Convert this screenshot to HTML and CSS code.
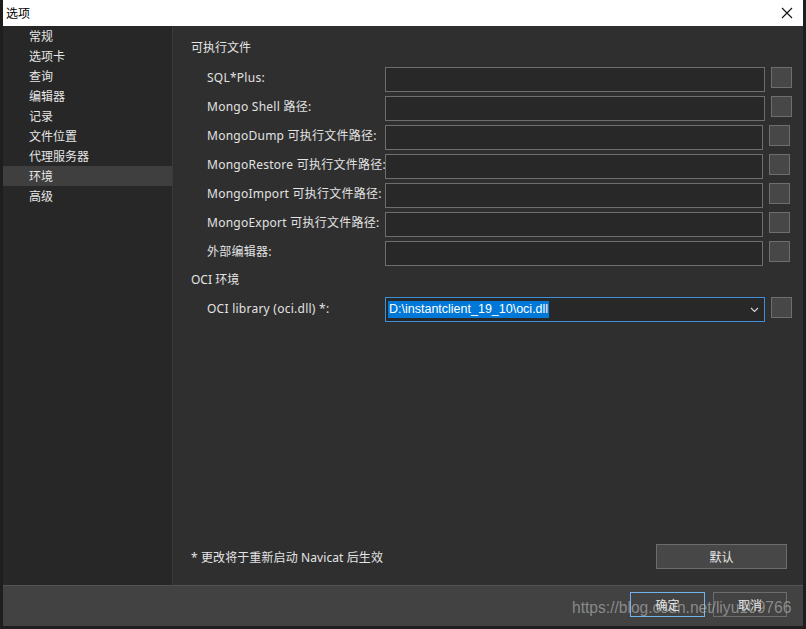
FILE: index.html
```html
<!DOCTYPE html>
<html lang="zh">
<head>
<meta charset="utf-8">
<title>选项</title>
<link rel="stylesheet" href="styles.css">
</head>
<body>
<div class="window">
  <div class="titlebar">
    <span class="title">选项</span>
    <svg class="close" width="12" height="12" viewBox="0 0 12 12"><path d="M1 1L11 11M11 1L1 11" stroke="#111" stroke-width="1.1" fill="none"/></svg>
  </div>
  <div class="main">
    <ul class="sidebar">
      <li>常规</li>
      <li>选项卡</li>
      <li>查询</li>
      <li>编辑器</li>
      <li>记录</li>
      <li>文件位置</li>
      <li>代理服务器</li>
      <li class="active">环境</li>
      <li>高级</li>
    </ul>
    <div class="content">
      <div class="heading">可执行文件</div>
      <div class="rows">
        <div class="row wide"><span class="label">SQL*Plus:</span><span class="input"></span><span class="btn-sq"></span></div>
        <div class="row wide"><span class="label">Mongo Shell 路径:</span><span class="input"></span><span class="btn-sq"></span></div>
        <div class="row"><span class="label">MongoDump 可执行文件路径:</span><span class="input"></span><span class="btn-sq"></span></div>
        <div class="row"><span class="label">MongoRestore 可执行文件路径:</span><span class="input"></span><span class="btn-sq"></span></div>
        <div class="row"><span class="label">MongoImport 可执行文件路径:</span><span class="input"></span><span class="btn-sq"></span></div>
        <div class="row"><span class="label">MongoExport 可执行文件路径:</span><span class="input"></span><span class="btn-sq"></span></div>
        <div class="row"><span class="label">外部编辑器:</span><span class="input"></span><span class="btn-sq"></span></div>
      </div>
      <div class="heading heading-oci">OCI 环境</div>
      <div class="row wide oci"><span class="label">OCI library (oci.dll) *:</span><span class="input combo"><span class="sel">D:\instantclient_19_10\oci.dll</span><svg class="chev" width="9" height="6" viewBox="0 0 9 6"><path d="M1 1L4.5 4.5L8 1" stroke="#d8d8d8" stroke-width="1.1" fill="none"/></svg></span><span class="btn-sq"></span></div>
      <div class="bottom">
        <span class="note">* 更改将于重新启动 Navicat 后生效</span>
        <span class="button default-btn">默认</span>
      </div>
    </div>
  </div>
  <div class="footer">
    <span class="button ok">确定</span>
    <span class="button">取消</span>
  </div>
</div>
<div class="watermark">https://blog.csdn.net/liyu109766</div>
</body>
</html>
```
FILE: styles.css
```css
html, body {
  margin: 0;
  padding: 0;
}
body {
  background: #1e1e1e;
  width: 806px;
  height: 629px;
  overflow: hidden;
  position: relative;
  font-family: "Noto Sans", "Noto Sans CJK SC", sans-serif;
  font-size: 12px;
  color: #e4e4e4;
}
.window {
  margin-left: 3px;
  width: 800px;
  height: 626px;
  display: flex;
  flex-direction: column;
  background: #2f2f2f;
}
.titlebar {
  height: 26px;
  background: #ffffff;
  display: flex;
  align-items: center;
  justify-content: space-between;
  padding: 0 10px 0 3px;
  box-sizing: border-box;
  flex: none;
}
.title {
  color: #000;
  font-family: "Noto Sans CJK SC", sans-serif;
  font-size: 12px;
  line-height: 16px;
}
.close {
  display: block;
}
.main {
  flex: 1;
  display: flex;
  min-height: 0;
}
.sidebar {
  list-style: none;
  margin: 0;
  padding: 0;
  width: 169px;
  background: #272727;
  border-right: 1px solid #3a3a3a;
  flex: none;
}
.sidebar li {
  height: 20px;
  line-height: 20px;
  padding-left: 26px;
  font-family: "Noto Sans CJK SC", sans-serif;
  color: #e6e6e6;
}
.sidebar li.active {
  background: #3f3f3f;
}
.content {
  flex: 1;
  display: flex;
  flex-direction: column;
  padding: 12px 0 16px 18px;
}
.heading {
  height: 20px;
  line-height: 20px;
}
.rows {
  margin-top: 9px;
  display: flex;
  flex-direction: column;
  gap: 4px;
}
.row {
  display: flex;
  align-items: flex-start;
  padding-left: 16px;
  height: 25px;
}
.label {
  width: 178px;
  flex: none;
  line-height: 21px;
  white-space: nowrap;
  color: #e2e2e2;
  letter-spacing: 0.25px;
}
.input {
  width: 376px;
  height: 23px;
  border: 1px solid #6e6e6e;
  background: #282828;
  flex: none;
  box-sizing: content-box;
}
.row.wide .input {
  width: 378px;
}
.btn-sq {
  width: 19px;
  height: 19px;
  margin-left: 6px;
  border: 1px solid #6e6e6e;
  background: #474747;
  flex: none;
}
.heading-oci {
  margin-top: 4px;
}
.oci {
  margin-top: 7px;
}
.oci .label {
  line-height: 23px;
}
.combo {
  border-color: #3d8fd9;
  display: flex;
  align-items: center;
  justify-content: space-between;
  padding: 0 0 0 2px;
  width: 376px;
}
.row.wide .combo {
  width: 376px;
}
.sel {
  background: #0078d7;
  color: #ffffff;
  line-height: 17px;
  padding: 0 1px;
  font-family: "Liberation Sans", "Noto Sans", sans-serif;
  font-size: 12.5px;
}
.chev {
  margin-right: 5px;
}
.bottom {
  margin-top: auto;
  display: flex;
  align-items: center;
  justify-content: space-between;
  padding-right: 16px;
}
.note {
  font-size: 12px;
  letter-spacing: 0.1px;
}
.button {
  box-sizing: border-box;
  height: 25px;
  width: 74px;
  border: 1px solid #6c6c6c;
  background: #434343;
  display: flex;
  align-items: center;
  justify-content: center;
  font-family: "Noto Sans CJK SC", sans-serif;
  color: #e8e8e8;
}
.default-btn {
  width: 131px;
  background: #474747;
}
.footer {
  height: 41px;
  flex: none;
  box-sizing: border-box;
  border-top: 1px solid #535353;
  background: #424242;
  display: flex;
  align-items: flex-start;
  justify-content: flex-end;
  gap: 8px;
  padding: 6px 16px 0 0;
}
.ok {
  width: 75px;
  border-color: #6fb4ee;
}
.watermark {
  position: absolute;
  left: 572px;
  top: 599px;
  font-family: "Liberation Sans", sans-serif;
  font-size: 15.6px;
  color: rgba(200, 200, 200, 0.55);
  white-space: nowrap;
  pointer-events: none;
}
```
